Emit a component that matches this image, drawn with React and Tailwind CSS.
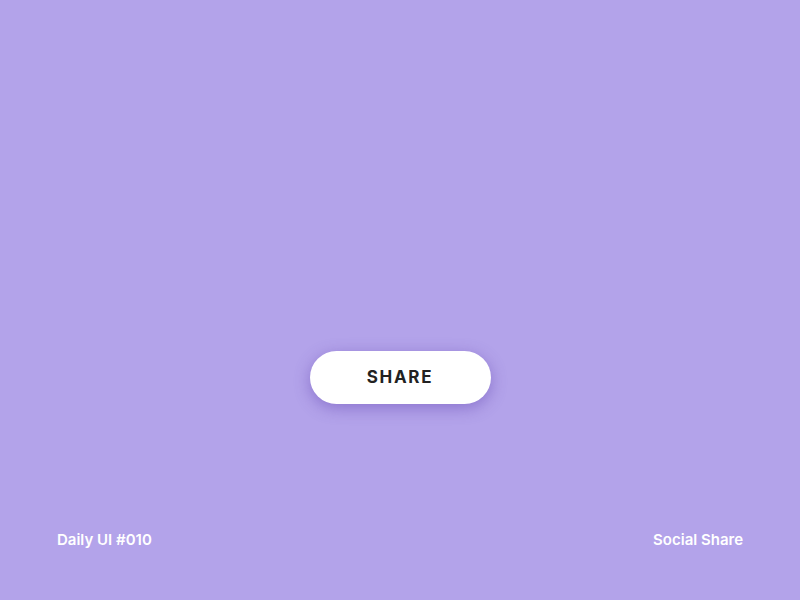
export default function App() {
  return (
    <div className="flex h-[600px] w-full flex-col bg-[#b3a3ea] font-['Inter',sans-serif]">
      <div className="flex justify-center pt-[351px]">
        <button
          type="button"
          className="flex h-[53px] w-[181px] items-center justify-center rounded-full bg-white pt-px text-[17px] font-bold tracking-[0.1em] text-[#222222] shadow-[0_4px_16px_rgba(90,60,170,0.45)]"
        >
          SHARE
        </button>
      </div>
      <div className="mt-auto flex items-center justify-between px-[57px] pb-[49px] text-[15px] font-semibold text-white">
        <span>Daily UI #010</span>
        <span>Social Share</span>
      </div>
    </div>
  );
}
